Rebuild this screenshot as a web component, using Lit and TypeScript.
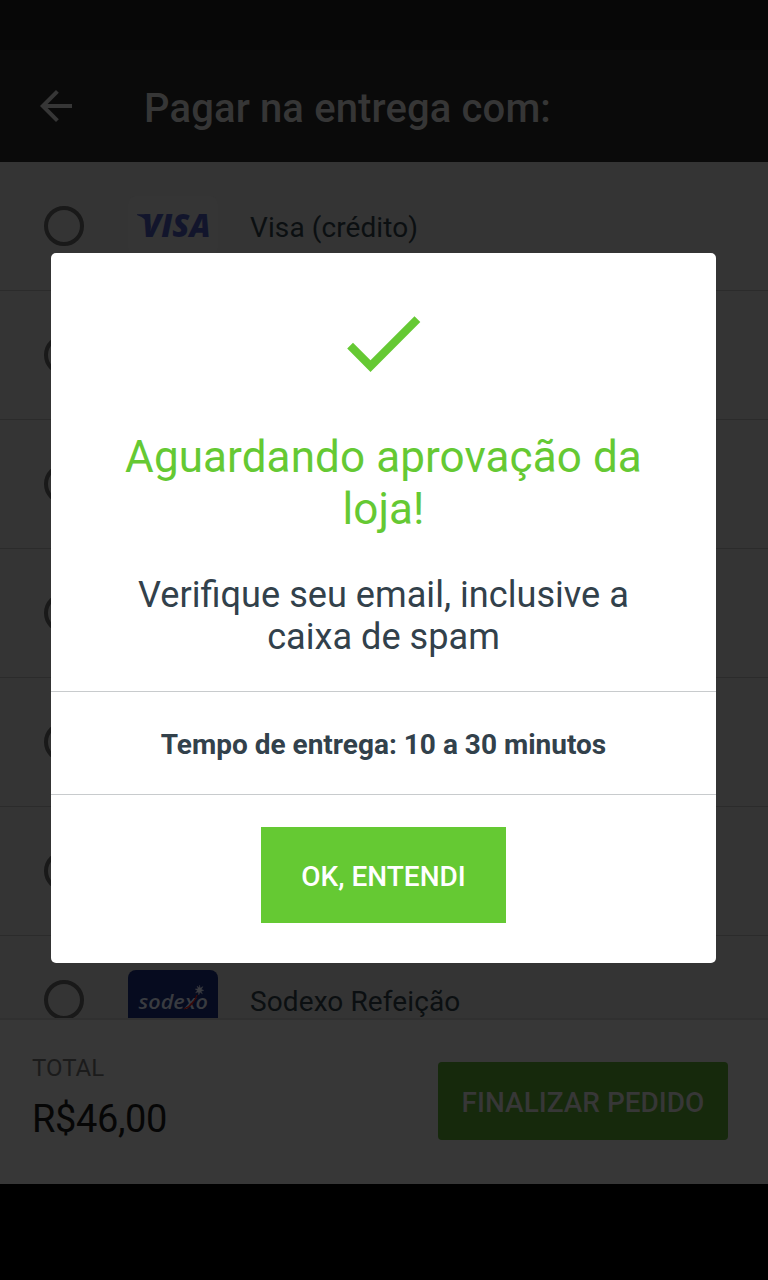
import { LitElement, html, css, svg } from "lit";
import { customElement } from "lit/decorators.js";

const visa = svg`
  <rect width="90" height="60" rx="8" fill="#353535"></rect>
  <path d="M9 18.300H17.500Q20.500 18.600 21 21L23 33Q19 22 9 19Z" fill="#12152c"></path>
  <text x="14" y="41" class="visa" textLength="68.500" lengthAdjust="spacingAndGlyphs">VISA</text>`;

const sodexo = svg`
  <rect width="90" height="60" rx="8" fill="#060b1f"></rect>
  <text x="10.500" y="39" class="sodexo" textLength="69.500" lengthAdjust="spacingAndGlyphs">sodexo</text>
  <path d="M56 39Q65 37 69 25Q67 31 63.500 33Q61 37 56 39Z" fill="#3a0808" stroke="#3a0808" stroke-width="1"></path>
  <path d="M71.500 15L72.300 18L75 16.500L73.500 19.200L76 20.500L73.200 21.200L74.500 24L72 22.300L70.800 25L70.200 22L67.500 23L69.300 20.500L67 19L70 18.800L69 16L71.200 17.800Z" fill="#393b40" stroke="#393b40" stroke-width=".3"></path>`;

const options = [
  { name: "Visa (crédito)", logo: visa },
  { name: "", logo: null },
  { name: "", logo: null },
  { name: "", logo: null },
  { name: "", logo: null },
  { name: "", logo: null },
  { name: "Sodexo Refeição", logo: sodexo },
];

@customElement("app-root")
export class AppRoot extends LitElement {
  static styles = css`
    :host {
      display: block;
      position: relative;
      width: 768px;
      height: 1280px;
      overflow: hidden;
      background: #000;
      font-family: Roboto, sans-serif;
    }
    * { box-sizing: border-box; }
    .screen { display: flex; flex-direction: column; height: 1184px; }
    .status { height: 50px; background: #070707; flex: none; }
    .header {
      height: 112px;
      flex: none;
      display: flex;
      align-items: center;
      padding: 0 32px;
      background: #0a0a0a;
      color: #363636;
    }
    .back { width: 48px; height: 48px; margin-right: 64px; }
    .title { font-size: 40px; line-height: 48px; font-weight: 500; letter-spacing: 0.13px; padding-top: 6px; white-space: nowrap; }
    .list { height: 856px; flex: none; overflow: hidden; background: #343434; }
    .row {
      height: 129px;
      display: flex;
      align-items: center;
      padding-left: 44px;
      border-bottom: 1px solid #2b2b2b;
    }
    .radio { width: 40px; height: 40px; border: 4px solid #191919; border-radius: 50%; }
    .logo { width: 90px; height: 60px; margin: 0 32px 0 44px; }
    .name { font-size: 28px; line-height: 34px; letter-spacing: 0.1px; padding-top: 3px; color: #0b0f11; }
    .visa { font: italic 800 32px "Open Sans", sans-serif; fill: #12152c; }
    .sodexo { font: italic 600 20.500px "Open Sans", sans-serif; fill: #393b40; }
    .footer {
      flex: 1;
      display: flex;
      justify-content: space-between;
      align-items: flex-start;
      border-top: 2px solid #303030;
      background: #373737;
      padding: 34px 40px 0 32px;
    }
    .label { font-size: 24px; line-height: 28px; color: #1b1b1b; }
    .amount { font-size: 38px; line-height: 46px; letter-spacing: -0.4px; color: #060606; margin-top: 14px; }
    .finish {
      width: 290px;
      height: 78px;
      margin-top: 8px;
      border-radius: 4px;
      background: #16290c;
      color: #373737;
      font-size: 28px;
      font-weight: 500;
      line-height: 81px;
      text-align: center;
      white-space: nowrap;
    }
    .dialog {
      position: absolute;
      left: 51px;
      top: 253px;
      width: 665px;
      height: 710px;
      border-radius: 5px;
      background: #fff;
      display: flex;
      flex-direction: column;
      align-items: center;
      text-align: center;
    }
    .check { width: 81px; height: 64px; margin-top: 60px; flex: none; }
    .heading { margin: 54px 0 0; font-size: 44px; line-height: 52px; font-weight: 400; letter-spacing: 0.1px; color: #65c933; }
    .message { margin: 39px 0 0; font-size: 36.150px; line-height: 42px; color: #32414b; }
    .time {
      width: 100%;
      height: 104px;
      margin-top: 33px;
      border: solid #c8cbcd;
      border-width: 1px 0;
      font-size: 28px;
      line-height: 106px;
      font-weight: 700;
      color: #32414b;
    }
    .ok {
      display: flex;
      align-items: center;
      justify-content: center;
      width: 245px;
      height: 96px;
      margin-top: 32px;
      padding: 3px 0 0;
      border: 0;
      background: #65c933;
      color: #fff;
      font: 500 28px/33px Roboto, sans-serif;
    }
  `;

  render() {
    return html`
      <div class="screen">
        <div class="status"></div>
        <div class="header">
          <svg class="back" viewBox="0 0 24 24"><path fill="#363636" d="M20 11H7.830l5.590-5.590L12 4l-8 8 8 8 1.410-1.410L7.830 13H20v-2z"></path></svg>
          <div class="title">Pagar na entrega com:</div>
        </div>
        <div class="list">
          ${options.map(
            (o) => html`<div class="row">
              <div class="radio"></div>
              <svg class="logo" viewBox="0 0 90 60">${o.logo}</svg>
              <div class="name">${o.name}</div>
            </div>`
          )}
        </div>
        <div class="footer">
          <div>
            <div class="label">TOTAL</div>
            <div class="amount">R$46,00</div>
          </div>
          <div class="finish">FINALIZAR PEDIDO</div>
        </div>
      </div>
      <div class="dialog">
        <svg class="check" viewBox="0 0 81 64"><path d="M4.200 35.500L10 29.700L27.500 47.300L71.500 3.200L77.300 9L27.500 59Z" fill="#65c933"></path></svg>
        <h1 class="heading">Aguardando aprovação da<br />loja!</h1>
        <p class="message">Verifique seu email, inclusive a<br />caixa de spam</p>
        <div class="time">Tempo de entrega: 10 a 30 minutos</div>
        <button class="ok">OK, ENTENDI</button>
      </div>
    `;
  }
}
